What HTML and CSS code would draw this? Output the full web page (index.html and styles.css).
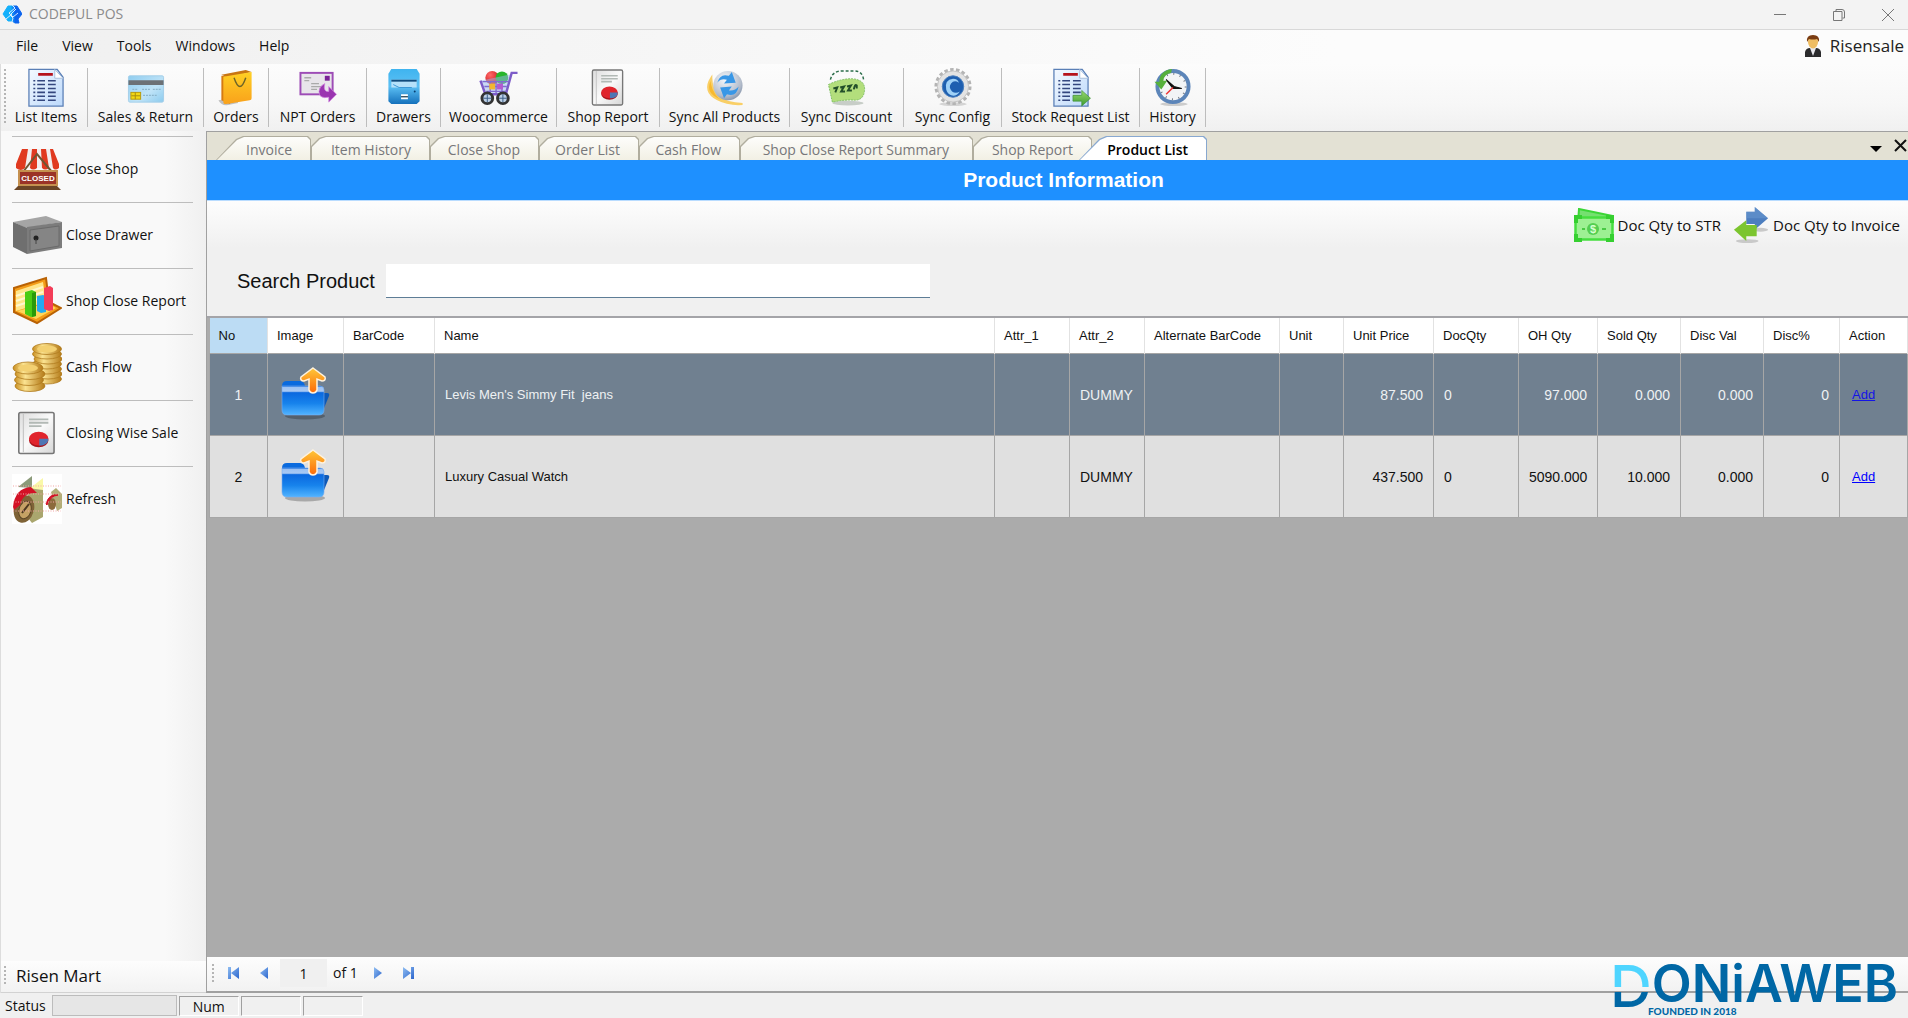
FILE: index.html
```html
<!DOCTYPE html>
<html lang="en">
<head>
<meta charset="utf-8">
<title>CODEPUL POS</title>
<link rel="stylesheet" href="styles.css">
</head>
<body>
<svg class="defs" width="0" height="0" aria-hidden="true">
  <defs>
    <linearGradient id="paper" x1="0" y1="0" x2="1" y2="1"><stop offset="0" stop-color="#f4f9ff"/><stop offset="1" stop-color="#bcd9fb"/></linearGradient>
    <linearGradient id="card" x1="0" y1="0" x2="1" y2="1"><stop offset="0" stop-color="#8fcdf0"/><stop offset=".6" stop-color="#c0e4f8"/><stop offset="1" stop-color="#8ccbee"/></linearGradient>
    <linearGradient id="bag" x1="0" y1="0" x2="0" y2="1"><stop offset="0" stop-color="#ffd024"/><stop offset="1" stop-color="#f9a11b"/></linearGradient>
    <linearGradient id="blueV" x1="0" y1="0" x2="0" y2="1"><stop offset="0" stop-color="#3fb4ef"/><stop offset=".5" stop-color="#5cc0f4"/><stop offset="1" stop-color="#1470bb"/></linearGradient>
    <linearGradient id="greyP" x1="0" y1="0" x2="1" y2="1"><stop offset="0" stop-color="#dcdcdc"/><stop offset=".5" stop-color="#fafafa"/><stop offset="1" stop-color="#d6d6d6"/></linearGradient>
    <radialGradient id="ball" cx=".4" cy=".3" r=".8"><stop offset="0" stop-color="#f6f8fb"/><stop offset=".7" stop-color="#b3bccb"/><stop offset="1" stop-color="#7687a0"/></radialGradient>
    <radialGradient id="redB" cx=".35" cy=".3" r=".8"><stop offset="0" stop-color="#ff6a6a"/><stop offset="1" stop-color="#c80f12"/></radialGradient>
    <linearGradient id="green" x1="0" y1="0" x2="0" y2="1"><stop offset="0" stop-color="#9ada6d"/><stop offset="1" stop-color="#3c9a32"/></linearGradient>
    <linearGradient id="folder" x1="0" y1="0" x2="0" y2="1"><stop offset="0" stop-color="#0a66dc"/><stop offset=".05" stop-color="#9dc2f3"/><stop offset=".18" stop-color="#a9c9f4"/><stop offset=".23" stop-color="#0b68df"/><stop offset=".6" stop-color="#1783ec"/><stop offset="1" stop-color="#52b4ff"/></linearGradient>
    <linearGradient id="upArrow" x1="0" y1="0" x2="0" y2="1"><stop offset="0" stop-color="#ffc738"/><stop offset="1" stop-color="#fc6a09"/></linearGradient>
    <linearGradient id="coin" x1="0" y1="0" x2="1" y2="0"><stop offset="0" stop-color="#c98f22"/><stop offset=".35" stop-color="#fbe391"/><stop offset="1" stop-color="#b47a18"/></linearGradient>
    <linearGradient id="nav" x1="0" y1="0" x2="1" y2="1"><stop offset="0" stop-color="#8fbdf2"/><stop offset="1" stop-color="#2c66cd"/></linearGradient>
    <linearGradient id="logo" x1="0" y1="0" x2="1" y2="0"><stop offset=".4" stop-color="#13b0fb"/><stop offset=".65" stop-color="#0b63ee"/></linearGradient>

    <symbol id="i-list" viewBox="0 0 40 40">
      <path d="M2.500 1.500h29l6 8v29.500h-35z" fill="url(#paper)" stroke="#5a7fb6" stroke-width="1.300"/>
      <path d="M29 1.500l8.500 9h-8.500z" fill="#fff" stroke="#a9bfdc"/>
      <path d="M12 6.500h15" stroke="#b5121b" stroke-width="3"/>
      <path d="M11 13h8M22 13h8M11 17h8M22 17h8M11 21h8M22 21h8M11 25h8M22 25h8M11 29h8M22 29h8M11 33h8M22 33h8" stroke="#34477f" stroke-width="1.600"/>
      <path d="M7 13h2M7 17h2M7 21h2M7 25h2M7 29h2M7 33h2" stroke="#34477f" stroke-width="1.600"/>
    </symbol>
    <symbol id="i-report" viewBox="0 0 40 40">
      <rect x="4" y="2" width="31" height="36" rx="1.500" fill="url(#greyP)" stroke="#777" stroke-width="1.400"/>
      <path d="M8 3v34" stroke="#c4c4c4"/>
      <path d="M13 8h17M13 11h17M13 14h11" stroke="#b2b9b5" stroke-width="1.600"/>
      <ellipse cx="21.500" cy="26.500" rx="8.500" ry="6" fill="#a9141b"/>
      <ellipse cx="21.500" cy="25" rx="8.500" ry="6" fill="#e0242c"/>
      <path d="M22 25h8c0 4-3 6-8 6z" fill="#4f76b4"/>
    </symbol>
    <symbol id="i-folder" viewBox="0 0 52 56">
      <ellipse cx="25" cy="50" rx="20" ry="3.500" fill="#000" opacity=".25"/>
      <path d="M40 27h7q3 0 2 3l-7 17z" fill="#0d59b8"/>
      <path d="M2 20q0-5 5-5h13q4 0 5 5h15v10H2z" fill="#0a6ade"/>
      <path d="M2 20h38q4 0 4 4v20q0 5-5 5H7q-5 0-5-5z" fill="url(#folder)" stroke="#78adf0" stroke-width=".6"/>
      <path d="M33 2l12 9c1 3-1 4-3 4l-5-2v11q-1 3-4 3t-4-3v-11l-5 2c-3 0-4-2-3-4z" fill="url(#upArrow)" stroke="#fff2dd" stroke-width="1.500"/>
    </symbol>
  </defs>
</svg>

<header class="titlebar">
  <svg class="app-logo" viewBox="0 0 20 20" aria-hidden="true"><path d="M6 2h9l5 8-4 5 1 4h-4l-3-2-4 0-5-7z" fill="url(#logo)" stroke="url(#logo)" stroke-linejoin="round"/><path d="M10 1l3 3-6 5 4 4 5-4M4 15l6-5M14 5l-6 6 3 3-1 4" fill="none" stroke="#d5eeff" stroke-width="1"/></svg>
  <span class="app-name">CODEPUL POS</span>
  <div class="window-controls">
    <button aria-label="Minimize"><svg viewBox="0 0 14 14"><path d="M1 6.500h12"/></svg></button>
    <button aria-label="Restore"><svg viewBox="0 0 14 14"><path d="M1.500 3.500h8.500v9h-8.500zM4 3.500v-2h6q2.500 0 2.500 2.500v6h-2"/></svg></button>
    <button aria-label="Close"><svg viewBox="0 0 14 14"><path d="M1 1l12 12M13 1l-12 12"/></svg></button>
  </div>
</header>

<nav class="menubar">
  <button>File</button><button>View</button><button>Tools</button><button>Windows</button><button>Help</button>
  <a class="user" href="#">
    <svg viewBox="0 0 18 24" aria-hidden="true"><path d="M1 23v-5q1-4 5-4h6q4 0 5 4v5z" fill="#2b2b2d"/><path d="M6 14l3 8 3-8z" fill="#e9e9ee"/><ellipse cx="9" cy="8" rx="5" ry="6.500" fill="#efbd63"/><path d="M3 8q-1-7 6-7t6 7l-2-3q-4 1-8 0z" fill="#7a3c12"/></svg>
    Risensale
  </a>
</nav>

<div class="toolbar">
  <button class="tool"><svg viewBox="0 0 40 40"><use href="#i-list"/></svg>List Items</button>
  <button class="tool"><svg viewBox="0 0 40 40"><rect x="2" y="8" width="36" height="27" rx="1.500" fill="url(#card)" stroke="#a5cfe8"/><path d="M2 15h36" stroke="#6c7176" stroke-width="5"/><path d="M6 22h6M16 22h8M27 22h9M17 28h14" stroke="#8db6cd" stroke-width="1.300" stroke-dasharray="2 1"/><rect x="4.500" y="25" width="10" height="7" fill="#f2d814" stroke="#b99b0c"/><path d="M5 28.500h9M9 25v7" stroke="#a88d10"/></svg>Sales &amp; Return</button>
  <button class="tool"><svg viewBox="0 0 40 40"><path d="M2 33q3 6 10 5l10-2v-6z" fill="#999" opacity=".6"/><path d="M5 8l9 1v28l-9-4z" fill="#d67a11"/><path d="M5 7l25-5 6 2-24 6z" fill="#c87513"/><path d="M7 9l29-5v27q0 2-2 2l-24 4q-3 0-3-2z" fill="url(#bag)"/><path d="M18 10q6 18 12 0" fill="none" stroke="#6e6428" stroke-width="1.500"/></svg>Orders</button>
  <button class="tool"><svg viewBox="0 0 40 40"><rect x="2" y="5" width="33" height="22" fill="#e8e5ea" stroke="#9d4cb6" stroke-width="2"/><rect x="27" y="8" width="5" height="5" fill="#7a2296"/><path d="M6 10h7M6 13h5M13 16h8M13 19h10M13 22h6" stroke="#aaa" stroke-width="1.300"/><path d="M27 16q-2 9 4 8v-5l8 8-8 8v-5q-10 2-10-6 0-5 6-8z" fill="#9a35b0" stroke="#d38be2" stroke-width=".7"/></svg>NPT Orders</button>
  <button class="tool"><svg viewBox="0 0 40 40"><path d="M7 1h26l3 5v28l-3 3H7l-3-3V6z" fill="url(#blueV)"/><rect x="7" y="12" width="26" height="8" fill="#b5e1fa"/><path d="M7 13h26" stroke="#104b7c" stroke-width="2"/><path d="M9 17l6 3h13" stroke="#3b97d6" fill="none"/><path d="M17 28h7M17 31h7" stroke="#fff" stroke-width="2"/><path d="M17 29.500h7" stroke="#333"/><circle cx="31" cy="24" r="1" fill="#083f70"/></svg>Drawers</button>
  <button class="tool"><svg viewBox="0 0 40 40"><circle cx="13" cy="10" r="7" fill="url(#redB)"/><circle cx="23" cy="10" r="6.500" fill="#27b52c"/><path d="M1 13l5 14h21l6-22h6" fill="#9ab7ef" fill-opacity=".5" stroke="#7d5cc8" stroke-width="2.500"/><path d="M3 14h27M5 19h23M7 24h21M11 14v12M17 14v12M23 14v12" stroke="#7f6bd0" stroke-width="1.400"/><path d="M10 16h6v6h-6z" fill="#f2b632"/><path d="M18 16h6v6h-6z" fill="#b45ad0"/><circle cx="8" cy="31" r="5.500" fill="#bcd0e6" stroke="#333" stroke-width="3"/><circle cx="24" cy="31" r="5.500" fill="#bcd0e6" stroke="#333" stroke-width="3"/><path d="M8 27v8M4 31h8M24 27v8M20 31h8" stroke="#3b5d85"/></svg>Woocommerce</button>
  <button class="tool"><svg viewBox="0 0 40 40"><use href="#i-report"/></svg>Shop Report</button>
  <button class="tool"><svg viewBox="0 0 40 40"><path d="M6 10q-9 14 6 22 11 6 26 5-17-1-24-7-8-8-8-20z" fill="#f7b92f" stroke="#f9cf66" stroke-width="2"/><circle cx="23" cy="18" r="15" fill="url(#ball)"/><path d="M12 15q3-10 12-7l3-4 4 11-12 1 3-4q-6-2-10 3zM34 19q-2 11-12 8l-3 4-4-11 12-1-3 4q6 1 10-4z" fill="#3997e6"/></svg>Sync All Products</button>
  <button class="tool"><svg viewBox="0 0 40 40"><ellipse cx="21" cy="36" rx="16" ry="2.500" fill="#c7cdc7"/><path d="M3 12q2-9 12-9h12q9 0 10 9" fill="none" stroke="#2b6d4a" stroke-width="1.500" stroke-dasharray="3 2"/><path d="M1 17q12-6 24-6 14 1 13 12-1 10-10 10-9-1-23 2z" fill="#b3de7c" stroke="#7dbd63" stroke-dasharray="2 1"/><path d="M6 21l4-1-2 5M13 20l4-1-3 5h4M20 19l4-1-3 5h4M27 22q1-6 3-4v3" fill="none" stroke="#234f2a" stroke-width="2"/></svg>Sync Discount</button>
  <button class="tool"><svg viewBox="0 0 40 40"><ellipse cx="20" cy="37" rx="14" ry="2" fill="#d4d4d4"/><circle cx="20" cy="19" r="17" fill="none" stroke="#b4b4b4" stroke-width="4" stroke-dasharray="3.500 2.400"/><circle cx="20" cy="19" r="16" fill="#e3e3e3" stroke="#c4c4c4"/><circle cx="20" cy="19" r="11" fill="#1e5fb0" stroke="#4d81bd"/><path d="M13 22q-2-10 7-11 5 0 6 4-5-3-8 1t1 8q4 3 8 0-4 6-9 4-4-2-5-6z" fill="#9fd1f7"/></svg>Sync Config</button>
  <button class="tool"><svg viewBox="0 0 40 40"><use href="#i-list"/><path d="M22 28h9v-5l9 8-9 8v-5h-9z" fill="url(#green)" stroke="#348c2c" stroke-width=".6"/></svg>Stock Request List</button>
  <button class="tool"><svg viewBox="0 0 40 40"><ellipse cx="21" cy="37" rx="14" ry="2" fill="#ccc"/><circle cx="20" cy="19" r="16" fill="#f2f4f6" stroke="#5c85b9" stroke-width="4"/><circle cx="20" cy="19" r="13" fill="none" stroke="#6d7480" stroke-width="2" stroke-dasharray="1 5.800"/><path d="M13 12l8 7 8 2-9 0z" fill="#111" stroke="#111" stroke-width="1.200"/><path d="M20 20l-7 7" stroke="#e33" stroke-width="1.500"/><path d="M19 1q-13 2-13 13H1l7 8 6-9h-4q1-7 8-8z" fill="#56b03c"/></svg>History</button>
</div>

<div class="workspace">
  <aside class="sidebar">
    <div class="side-list">
      <button class="side"><svg viewBox="0 0 50 50"><path d="M11 5h29l7 19H4z" fill="#f1eeee"/><path d="M4 20l6-15h6l-3 19q-4 4-9 0zM20 5h5v19q-4 3-7 0zM29 5h5l3 19q-4 3-7 0zM38 5h3l6 15v4q-4 3-6 0z" fill="#e03a20"/><path d="M11 28L25 10l15 18" fill="none" stroke="#6f5632" stroke-width="2"/><rect x="7" y="27" width="38" height="14" fill="#9b3327" stroke="#c5904f" stroke-width="2"/><text x="26" y="37" class="sign">CLOSED</text><path d="M2 46h47l-4-4H6z" fill="#6a4526"/></svg>Close Shop</button>
      <button class="side"><svg viewBox="0 0 50 50"><path d="M1 12L34 6l16 6-36 6z" fill="#a5a5a5"/><path d="M1 12l14 6v26L1 37z" fill="#6f6f6f"/><path d="M15 17l35-5v26l-35 6z" fill="#7c7c7c"/><path d="M18 20l29-4v20l-29 5z" fill="#858585" stroke="#6a6a6a"/><circle cx="24" cy="28" r="2.500" fill="#222"/><path d="M24 29v5" stroke="#444"/></svg>Close Drawer</button>
      <button class="side"><svg viewBox="0 0 50 50"><path d="M2 12L34 2l3 24 12 6-24 15L2 36z" fill="#f49c18" stroke="#b96205" stroke-width="2"/><path d="M4 15l27-9 3 20-30 9z" fill="#ffe58a"/><path d="M4 20l27-9M4 25l27-9M4 30l28-9" stroke="#fff6ce" stroke-width="2"/><path d="M5 35l31-8 8 5-20 11z" fill="#ffd75a"/><path d="M13 16l7-2 4 2v24l-5 1-6-3z" fill="#49cb13"/><path d="M20 17l4-1v24l-4 1z" fill="#2a9a0a"/><path d="M25 20l6-1 3 1v16l-5 1-4-2z" fill="#25a9ef"/><path d="M32 12l6-2 3 2v22l-4 1-5-2z" fill="#f33d58"/></svg>Shop Close Report</button>
      <button class="side"><svg viewBox="0 0 50 50"><g fill="url(#coin)" stroke="#b07b1e" stroke-width=".8"><ellipse cx="35" cy="37" rx="14.500" ry="5"/><ellipse cx="36" cy="32" rx="14" ry="5"/><ellipse cx="35" cy="27" rx="14.500" ry="5"/><ellipse cx="35" cy="22" rx="14.500" ry="5"/><ellipse cx="36" cy="17" rx="14" ry="5"/><ellipse cx="35" cy="12" rx="14.500" ry="5"/><ellipse cx="35" cy="7" rx="14.500" ry="5.500"/><ellipse cx="18" cy="44" rx="15" ry="5.500"/><ellipse cx="17" cy="38" rx="14.500" ry="5.500"/><ellipse cx="18" cy="32" rx="15" ry="5.500"/><ellipse cx="16" cy="26" rx="15" ry="6"/></g><ellipse cx="35" cy="7" rx="10" ry="3.500" fill="#f3d071"/><ellipse cx="16" cy="26" rx="10" ry="3.500" fill="#f3d071"/></svg>Cash Flow</button>
      <button class="side"><svg viewBox="-2 -2 44 44"><use href="#i-report" width="40" height="40"/></svg>Closing Wise Sale</button>
      <button class="side"><svg viewBox="0 0 50 50"><path fill="#fff" d="M0 0h50v50H0z"/><path d="M6 13l14-11v12z" fill="#8b9a79"/><path d="M17 15l14-11v12z" fill="#faf8a8"/><path d="M16 14l15 2v27l-11 6-4-5z" fill="#aaa66e"/><ellipse cx="12" cy="35" rx="10" ry="14" fill="#7f6337" transform="rotate(15 12 35)"/><ellipse cx="13" cy="36" rx="6" ry="9" fill="#c5a265" stroke="#5b4526" transform="rotate(15 13 36)"/><path d="M10 39l7-9" stroke="#4d3920" stroke-width="2"/><path d="M1 33q2-19 18-20l6 6q-14-1-17 12l-6 5z" fill="#d31226"/><path d="M39 18l5-4 6 6v14l-5 3z" fill="#b2ad77"/><ellipse cx="40" cy="30" rx="4" ry="6" fill="#8c6a3c"/><path d="M34 30q3-11 12-9-8 1-11 10z" fill="#d31226" stroke="#d31226"/><path d="M1 12h48M1 20h48M1 28h48M1 37h48" stroke="#f3a6a6" stroke-dasharray="1 1.500"/></svg>Refresh</button>
    </div>
    <div class="store">Risen Mart</div>
  </aside>

  <main class="document">
    <div class="tabs">
      <button class="tab first">Invoice</button><button class="tab w119">Item History</button><button class="tab w109">Close Shop</button><button class="tab w100">Order List</button><button class="tab w101">Cash Flow</button><button class="tab w233">Shop Close Report Summary</button><button class="tab w119">Shop Report</button><button class="tab active">Product List</button>
      <div class="tab-actions">
        <button aria-label="Tab list"><svg width="12" height="8" viewBox="0 0 12 8"><path d="M0 1h12l-6 6z"/></svg></button>
        <button aria-label="Close tab"><svg width="14" height="14" viewBox="0 0 14 14"><path d="M1 1l11 11M12 1l-11 11" stroke="#111" stroke-width="2"/></svg></button>
      </div>
    </div>
    <h1 class="heading">Product Information</h1>
    <div class="doc-tools">
      <button><svg width="40" height="34" viewBox="0 0 40 34"><path d="M5 1l34 7-2 20H3z" fill="#75e070" stroke="#3bd636" stroke-width="2"/><rect x="1.500" y="9.500" width="37" height="22" fill="#9df093" stroke="#45de3f" stroke-width="2.500"/><path d="M2 15V9h6M32 9h6v6M2 26v6h6M32 32h6v-6" stroke="#35cf30" stroke-width="4" fill="none"/><circle cx="19" cy="21" r="6" fill="#54ce51"/><text x="19" y="25" class="dollar">$</text><path d="M8 21h3M28 21h4" stroke="#48c944" stroke-width="2"/></svg>Doc Qty to STR</button>
      <button><svg width="36" height="40" viewBox="0 0 38 40"><ellipse cx="15" cy="37" rx="12" ry="2" fill="#c9c9c9"/><ellipse cx="29" cy="25" rx="8" ry="2" fill="#c9c9c9"/><path d="M14 6h9V1l14 12-14 12v-6h-9z" fill="#4d7ebf"/><path d="M25 20v12H14v5L1 25l13-10v5z" fill="#7cc52f"/><path d="M14 6h9V1l14 12H14z" fill="#6c99d2" opacity=".5"/></svg>Doc Qty to Invoice</button>
    </div>
    <div class="search">
      <label for="product-search">Search Product</label>
      <input id="product-search" type="text">
    </div>
    <div class="grid-area">
      <table class="grid">
        <colgroup><col class="c58"><col class="c76"><col class="c91"><col><col class="c75"><col class="c75"><col class="c135"><col class="c64"><col class="c90"><col class="c85"><col class="c79"><col class="c83"><col class="c83"><col class="c76"><col class="c68"></colgroup>
        <thead><tr><th class="sel">No</th><th>Image</th><th>BarCode</th><th>Name</th><th>Attr_1</th><th>Attr_2</th><th>Alternate BarCode</th><th>Unit</th><th>Unit Price</th><th>DocQty</th><th>OH Qty</th><th>Sold Qty</th><th>Disc Val</th><th>Disc%</th><th>Action</th></tr></thead>
        <tbody>
          <tr class="selected"><td class="ctr">1</td><td class="pic"><svg width="52" height="56"><use href="#i-folder"/></svg></td><td></td><td class="name">Levis Men's Simmy Fit&nbsp; jeans</td><td></td><td>DUMMY</td><td></td><td></td><td class="num">87.500</td><td>0</td><td class="num">97.000</td><td class="num">0.000</td><td class="num">0.000</td><td class="num">0</td><td class="act"><a href="#">Add</a></td></tr>
          <tr><td class="ctr">2</td><td class="pic"><svg width="52" height="56"><use href="#i-folder"/></svg></td><td></td><td class="name">Luxury Casual Watch</td><td></td><td>DUMMY</td><td></td><td></td><td class="num">437.500</td><td>0</td><td class="num">5090.000</td><td class="num">10.000</td><td class="num">0.000</td><td class="num">0</td><td class="act"><a href="#">Add</a></td></tr>
        </tbody>
      </table>
    </div>
    <div class="pager">
      <button aria-label="First page"><svg viewBox="0 0 12 14"><path d="M0 1h3v12H0zM11 1v12l-8-6z"/></svg></button>
      <button aria-label="Previous page"><svg viewBox="0 0 12 14"><path d="M10 1v12L2 7z"/></svg></button>
      <input type="text" value="1" aria-label="Page">
      <span>of 1</span>
      <button aria-label="Next page"><svg viewBox="0 0 12 14"><path d="M2 1v12l8-6z"/></svg></button>
      <button aria-label="Last page"><svg viewBox="0 0 12 14"><path d="M9 1h3v12H9zM1 1v12l8-6z"/></svg></button>
    </div>
  </main>
</div>

<footer class="statusbar">
  <span>Status</span><span class="progress"></span><span class="cell">Num</span><span class="cell"></span><span class="cell"></span>
</footer>
<div class="brand"><span class="brand-d">D</span><span class="brand-name">ONiAWEB</span><small>FOUNDED IN 2018</small></div>
</body>
</html>
```
FILE: styles.css
```css
* { box-sizing: border-box; }
body {
  margin: 0;
  height: 100vh;
  display: flex;
  flex-direction: column;
  overflow: hidden;
  background: #f0f0f0;
  color: #111;
  font: 14px/20px "Open Sans", "Noto Sans", sans-serif;
}
button {
  border: 0;
  padding: 0;
  background: none;
  color: inherit;
  font: inherit;
}
a { color: #00f; }
.defs { position: absolute; }

.titlebar {
  flex: none;
  height: 30px;
  display: flex;
  align-items: center;
  gap: 7px;
  padding: 0 0 2px 2px;
  background: #f3f3f3;
  border-bottom: 1px solid #d8d8d8;
  color: #8b8b8b;
}
.app-logo { width: 20px; height: 20px; }
.window-controls { margin-left: auto; display: flex; }
.window-controls button { width: 59px; height: 27px; }
.window-controls button:last-child { width: 40px; }
.window-controls svg {
  width: 14px;
  height: 14px;
  vertical-align: middle;
  fill: none;
  stroke: #777;
}

.menubar {
  flex: none;
  height: 34px;
  display: flex;
  align-items: center;
  gap: 24px;
  padding: 0 4px 2px 16px;
  background: linear-gradient(90deg, #f0f0f0, #fcfcfc 70%);
}
.user {
  margin-left: auto;
  display: flex;
  align-items: center;
  gap: 8px;
  color: #222;
  font-size: 17px;
  text-decoration: none;
}
.user svg { width: 18px; height: 24px; }

.toolbar {
  flex: none;
  height: 67px;
  display: grid;
  grid-template-columns: 83px 116px 65px 98px 74px 116px 103px 130px 114px 98px 138px 66px;
  padding: 4px 0 6px 4px;
  background: linear-gradient(#fcfcfc, #f7f7f7 60%, #f0f0f0);
  border-left: 1px solid #ddd;
}
.toolbar::before {
  content: "";
  position: absolute;
  left: 4px;
  top: 69px;
  height: 54px;
  border-left: 2px dotted #b5b5b5;
}
.tool {
  display: flex;
  flex-direction: column;
  align-items: center;
  white-space: nowrap;
  border-right: 1px solid #bdbdbd;
  line-height: 20px;
}
.tool svg { flex: none; width: 40px; height: 39px; }

.workspace { flex: 1; min-height: 0; display: flex; }
.sidebar {
  flex: none;
  width: 206px;
  display: flex;
  flex-direction: column;
  background: linear-gradient(90deg, #f9f9f9 80%, #f0f0f0);
  border-left: 1px solid #ddd;
}
.side-list { flex: 1; padding: 5px 13px 0 11px; }
.side {
  width: 100%;
  height: 66px;
  display: flex;
  align-items: center;
  gap: 4px;
  padding-bottom: 2px;
  border-top: 1px solid #bdbdbd;
  white-space: nowrap;
}
.side svg { width: 50px; height: 50px; }
.sign {
  font: bold 8px "Liberation Sans", sans-serif;
  fill: #fff;
  text-anchor: middle;
}
.store {
  flex: none;
  height: 32px;
  padding: 3px 0 0 15px;
  background: linear-gradient(#fdfdfd, #f2f2f2);
  border-bottom: 1px solid #d2d2d2;
  font-size: 17px;
  line-height: 24px;
}
.store::before {
  content: "";
  position: absolute;
  left: 4px;
  height: 18px;
  margin-top: 2px;
  border-left: 2px dotted #b5b5b5;
}

.document {
  flex: 1;
  min-width: 0;
  display: flex;
  flex-direction: column;
  border: 1px solid #a0a0a0;
  border-width: 1px 0 2px 1px;
}
.tabs {
  flex: none;
  height: 28px;
  display: flex;
  align-items: flex-end;
  padding-left: 9px;
  background: #e3e1d4;
}
.tab {
  --shape: polygon(0 100%, 0 10px, 8px 2px, 14px 0, calc(100% - 3px) 0, 100% 3px, 100% 100%);
  --fill: linear-gradient(#fdfdfb, #f2f0e4);
  --edge: #b0ad9e;
  position: relative;
  isolation: isolate;
  flex: none;
  height: 24px;
  padding: 3px 19px 0 0;
  color: #77777a;
  text-align: right;
  white-space: nowrap;
}
.tab::before, .tab::after {
  content: "";
  position: absolute;
  z-index: -1;
  inset: 0;
  background: var(--edge);
  clip-path: var(--shape);
}
.tab::after { inset: 1px 1px 0; background: var(--fill); }
.tab.first, .tab.active {
  --shape: polygon(0 100%, 20px 3px, 27px 0, calc(100% - 3px) 0, 100% 3px, 100% 100%);
  width: 95px;
}
.tab.active {
  --fill: #fff;
  --edge: #88a8d0;
  width: 128px;
  margin-left: -13px;
  color: #000;
  font-weight: 600;
}
.w119 { width: 119px; }
.w109 { width: 109px; }
.w100 { width: 100px; }
.w101 { width: 101px; }
.w233 { width: 233px; padding-right: 24px; }
.tab-actions {
  margin-left: auto;
  display: flex;
  align-items: center;
  gap: 12px;
  height: 28px;
  padding-top: 4px;
}
.tab-actions button { height: 20px; }
.heading {
  flex: none;
  height: 41px;
  margin: 0;
  padding-left: 12px;
  background: #1e90ff;
  border-bottom: 1px solid #b9dcff;
  color: #fff;
  font: bold 21px/40px "Liberation Sans", sans-serif;
  text-align: center;
}
.doc-tools {
  flex: none;
  height: 47px;
  display: flex;
  justify-content: flex-end;
  align-items: center;
  gap: 12px;
  padding-right: 8px;
  background: linear-gradient(#fdfdfd, #f0f0f0);
  font-size: 15px;
}
.doc-tools button { display: flex; align-items: center; gap: 4px; }
.dollar {
  font: bold 11px "Liberation Sans", sans-serif;
  fill: #d7ffd2;
  text-anchor: middle;
}
.search {
  flex: none;
  height: 68px;
  display: flex;
  align-items: center;
  gap: 11px;
  padding-bottom: 2px;
  font: 20px "Liberation Sans", sans-serif;
}
.search label { margin-left: 30px; }
.search input {
  width: 32%;
  height: 34px;
  border: 0;
  border-bottom: 1px solid #5e7d96;
  background: #fff;
  font: inherit;
}

.grid-area {
  flex: 1;
  min-height: 0;
  padding-left: 2px;
  background: #ababab;
  border-top: 2px solid #a4a4a8;
}
.grid {
  width: 100%;
  table-layout: fixed;
  border-collapse: collapse;
  font: 14px/18px "Liberation Sans", sans-serif;
}
.grid th {
  height: 35px;
  padding: 1px 0 0 9px;
  background: #fff;
  border-right: 1px solid #e2e2e2;
  font-size: 13px;
  font-weight: 400;
  text-align: left;
  white-space: nowrap;
}
.grid th.sel { background: #bcdcf4; }
.grid td {
  height: 82px;
  padding: 1px 10px 0;
  background: #e0e0e0;
  border: 1px solid #a6a6a6;
  white-space: nowrap;
}
.grid .selected td { background: #708090; color: #eef1f3; }
.grid .selected a { color: #1414e6; }
.grid .ctr { text-align: center; }
.grid .num { text-align: right; }
.grid .name { font-size: 13px; }
.grid .act { padding-left: 12px; font-size: 13px; }
.grid .pic { padding: 0; text-align: center; }
.pic svg { vertical-align: middle; }
.c58 { width: 58px; }
.c64 { width: 64px; }
.c68 { width: 68px; }
.c75 { width: 75px; }
.c76 { width: 76px; }
.c79 { width: 79px; }
.c83 { width: 83px; }
.c85 { width: 85px; }
.c90 { width: 90px; }
.c91 { width: 91px; }
.c135 { width: 135px; }

.pager {
  flex: none;
  height: 34px;
  display: flex;
  align-items: center;
  gap: 18px;
  padding: 0 0 2px 21px;
  background: linear-gradient(#fdfdfd, #f2f2f2);
}
.pager::before {
  content: "";
  position: absolute;
  left: 212px;
  height: 18px;
  border-left: 2px dotted #b5b5b5;
}
.pager button { width: 12px; height: 14px; line-height: 0; }
.pager svg { width: 12px; height: 14px; fill: url(#nav); }
.pager input {
  width: 47px;
  height: 28px;
  margin: 0 -12px 0 -8px;
  border: 0;
  background: #f0f0f0;
  color: inherit;
  font: inherit;
  text-align: center;
}
.pager span { margin-right: -4px; }

.statusbar {
  flex: none;
  height: 25px;
  display: flex;
  align-items: center;
  gap: 2px;
  padding-left: 5px;
  background: #f0f0f0;
}
.statusbar .progress {
  width: 125px;
  height: 21px;
  margin-left: 4px;
  background: #e6e6e6;
  border: 1px solid #bcbcbc;
}
.statusbar .cell {
  width: 60px;
  height: 20px;
  border: 1px solid #a0a0a0;
  border-color: #a0a0a0 #fff #fff #a0a0a0;
  text-align: center;
}

.brand {
  position: absolute;
  right: 4px;
  bottom: 2px;
  width: 294px;
  height: 54px;
  color: #0067a5;
  display: flex;
  font-family: Inter, sans-serif;
  font-weight: 600;
}
.brand-d {
  font-size: 58px;
  line-height: 48px;
  font-weight: 500;
  background: linear-gradient(#4fd5ff 46%, transparent 46%, transparent 56%, #0067a5 56%);
  -webkit-background-clip: text;
  background-clip: text;
  color: transparent;
}
.brand-name { font-size: 52px; line-height: 44px; }
.brand small {
  position: absolute;
  left: 38px;
  bottom: 0;
  font: 900 10px/10px Lato, sans-serif;
}
```
